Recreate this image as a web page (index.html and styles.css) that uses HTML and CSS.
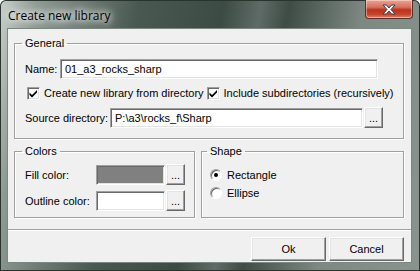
FILE: index.html
```html
<!DOCTYPE html>
<html lang="en">
<head>
    <meta charset="UTF-8">
    <title>Create new library</title>
    <link rel="stylesheet" href="styles.css">
</head>
<body>
<div class="window">
    <!-- title bar -->
    <div class="titlebar">
        <div class="title">Create new library</div>
        <div class="close">
            <svg width="14" height="11" viewBox="0 0 14 11">
                <path d="M1 1h3.5l2.5 3 2.5-3H13l-4 4.5 4 4.5H9.5L7 7 4.5 10H1l4-4.5z" fill="#fff" stroke="#3d3f4a" stroke-width="1"/>
            </svg>
        </div>
    </div>

    <div class="client">
        <fieldset class="group general">
            <legend>General</legend>
            <div class="row name-row">
                <label class="name-label">Name:</label>
                <div class="field name-field">01_a3_rocks_sharp</div>
            </div>
            <div class="row checks">
                <span class="check"><svg width="9" height="9" viewBox="0 0 9 9"><path d="M0.5 3.5l2.5 2.5L8 1v2.5L3 8.5 0.5 6z" fill="#000"/></svg></span>
                <span class="check-text">Create new library from directory</span>
                <span class="check"><svg width="9" height="9" viewBox="0 0 9 9"><path d="M0.5 3.5l2.5 2.5L8 1v2.5L3 8.5 0.5 6z" fill="#000"/></svg></span>
                <span class="check-text">Include subdirectories (recursively)</span>
            </div>
            <div class="row src-row">
                <label class="src-label">Source directory:</label>
                <div class="field src-field">P:\a3\rocks_f\Sharp</div>
                <button class="dots">...</button>
            </div>
        </fieldset>

        <div class="lower">
            <fieldset class="group colors">
                <legend>Colors</legend>
                <div class="row">
                    <label class="color-label">Fill color:</label>
                    <div class="field swatch fill"></div>
                    <button class="dots">...</button>
                </div>
                <div class="row">
                    <label class="color-label">Outline color:</label>
                    <div class="field swatch"></div>
                    <button class="dots">...</button>
                </div>
            </fieldset>
            <fieldset class="group shape">
                <legend>Shape</legend>
                <div class="radio-row"><span class="radio on"></span>Rectangle</div>
                <div class="radio-row"><span class="radio"></span>Ellipse</div>
            </fieldset>
        </div>

        <div class="separator"></div>

        <div class="buttons">
            <button class="btn">Ok</button>
            <button class="btn">Cancel</button>
        </div>
    </div>
</div>
</body>
</html>
```

FILE: styles.css
```css
body {
    margin: 0;
    font-family: "Liberation Sans", Arial, sans-serif;
    font-size: 11px;
    color: #000;
}

.window {
    width: 420px;
    height: 271px;
    box-sizing: border-box;
    padding: 0 8px 8px 7px;
    display: flex;
    flex-direction: column;
    border-radius: 6px 6px 0 0;
    background:
        linear-gradient(100deg, #c9d0cc 0%, #8e9a94 8%, #4a5852 30%, #3d4b45 48%, #5f6b66 56%, #3f4c46 62%, #7d8883 78%, #8a948f 100%);
    box-shadow: inset 0 0 0 1px #2b332f;
}

.titlebar {
    height: 28px;
    display: flex;
    align-items: flex-start;
}

.title {
    padding: 7px 0 0 1px;
    font-family: "Open Sans", "Liberation Sans", sans-serif;
    font-size: 12px;
    color: #000;
    text-shadow: 0 0 6px #fff, 0 0 10px #fff, 0 0 14px #fff;
}

.close {
    margin-left: auto;
    margin-right: -1px;
    width: 46px;
    height: 18px;
    border: 1px solid #5a2f28;
    border-top: none;
    border-radius: 0 0 4px 4px;
    background: linear-gradient(#e9a494 0%, #d4715d 40%, #b9321c 55%, #c4452b 80%, #e0826a 100%);
    box-shadow: inset 0 0 0 1px rgba(255, 255, 255, 0.4);
    display: flex;
    align-items: center;
    justify-content: center;
}

.client {
    flex: 1;
    background: #f0f0f0;
    border: 1px solid #7d8782;
    padding: 8px 7px 0 6px;
    display: flex;
    flex-direction: column;
}

.group {
    margin: 0;
    border: 1px solid #a0a0a0;
    box-shadow: inset 1px 1px 0 #fff, 1px 1px 0 #fff;
    padding: 0 9px 0 10px;
}

.group legend {
    padding: 0 3px;
    margin-left: -3px;
    line-height: 13px;
}

.row {
    display: flex;
    align-items: center;
    white-space: nowrap;
}

.name-row {
    margin-top: 9px;
}

.name-label {
    width: 35px;
}

.field {
    height: 20px;
    box-sizing: border-box;
    background: #fff;
    border-style: solid;
    border-width: 1px;
    border-color: #a0a0a0 #fff #fff #a0a0a0;
    box-shadow: inset 1px 1px 0 #696969, inset -1px -1px 0 #e3e3e3;
    padding: 3px 0 0 4px;
    white-space: nowrap;
    flex-shrink: 0;
}

.name-field {
    width: 318px;
}

.checks {
    height: 14px;
    margin-top: 7px;
}

.check {
    flex-shrink: 0;
    width: 13px;
    height: 13px;
    box-sizing: border-box;
    background: #fff;
    border-style: solid;
    border-width: 1px;
    border-color: #a0a0a0 #fff #fff #a0a0a0;
    box-shadow: inset 1px 1px 0 #696969, inset -1px -1px 0 #e3e3e3;
    display: flex;
    align-items: center;
    justify-content: center;
    margin: 0 4px 0 2px;
}

.check-text {
    flex-shrink: 0;
}

.check-text + .check {
    margin-left: 3px;
}

.src-row {
    margin-top: 7px;
}

.src-label {
    width: 85px;
}

.src-field {
    width: 253px;
}

.dots {
    flex-shrink: 0;
    width: 19px;
    height: 21px;
    margin: 0 0 0 1px;
    padding: 0 0 4px;
    font: inherit;
    line-height: 21px;
    color: #000;
    background: #f0f0f0;
    border-style: solid;
    border-width: 1px;
    border-color: #fff #696969 #696969 #fff;
    box-shadow: inset -1px -1px 0 #a0a0a0, inset 1px 1px 0 #e3e3e3;
}

.general {
    padding-bottom: 10px;
}

.lower {
    display: flex;
    gap: 6px;
    margin-top: 6px;
}

.colors {
    width: 160px;
    padding-bottom: 6px;
}

.colors .row {
    margin-top: 5px;
}

.colors .row:first-of-type {
    margin-top: 6px;
}

.color-label {
    width: 71px;
}

.swatch {
    width: 69px;
    height: 20px;
}

.swatch.fill {
    background: #808080;
}

.shape {
    flex: 1;
    padding-left: 8px;
}

.radio-row {
    display: flex;
    align-items: center;
    height: 18px;
}

.radio-row:first-of-type {
    margin-top: 8px;
}

.radio {
    width: 12px;
    height: 12px;
    box-sizing: border-box;
    border-radius: 50%;
    background: #fff;
    border: 1px solid;
    border-color: #a0a0a0 #fff #fff #a0a0a0;
    box-shadow: inset 1px 1px 0 #696969;
    margin-right: 5px;
    display: flex;
    align-items: center;
    justify-content: center;
}

.radio.on::after {
    content: "";
    width: 4px;
    height: 4px;
    border-radius: 50%;
    background: #000;
}

.separator {
    margin: 11px -7px 0 -6px;
    border-top: 1px solid #a0a0a0;
    border-bottom: 1px solid #fff;
}

.buttons {
    display: flex;
    justify-content: flex-end;
    gap: 3px;
    margin-top: 6px;
}

.btn {
    width: 75px;
    height: 24px;
    font: inherit;
    color: #000;
    background: #f0f0f0;
    border-style: solid;
    border-width: 1px;
    border-color: #fff #696969 #696969 #fff;
    box-shadow: inset -1px -1px 0 #a0a0a0, inset 1px 1px 0 #e3e3e3;
}
```
